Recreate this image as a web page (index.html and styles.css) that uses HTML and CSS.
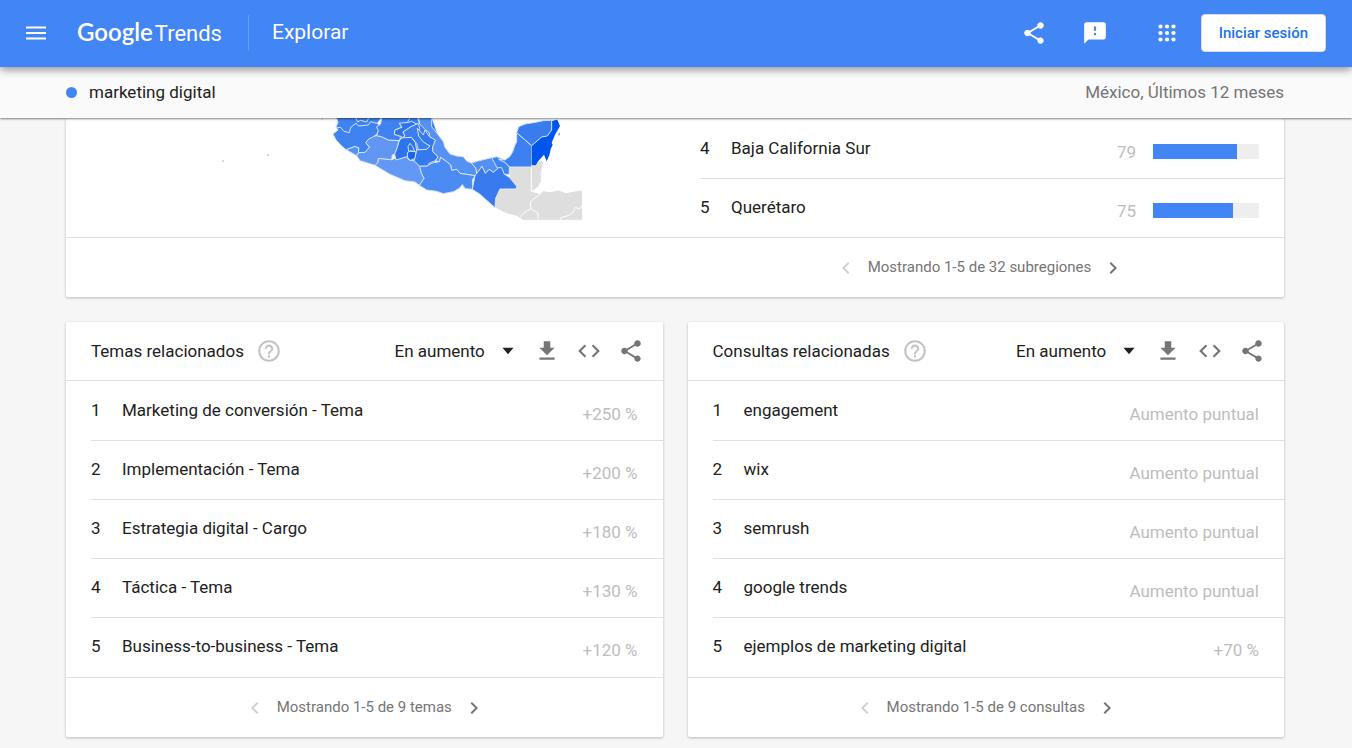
FILE: index.html
```html
<!DOCTYPE html>
<html lang="es">
<head>
<meta charset="utf-8">
<meta name="viewport" content="width=device-width, initial-scale=1">
<title>marketing digital - Explorar - Google Trends</title>
<link rel="stylesheet" href="styles.css">
</head>
<body>
<svg class="sprite" aria-hidden="true">
  <symbol id="share" viewBox="0 0 24 24"><path d="M18 16.08c-.76 0-1.44.3-1.96.77L8.91 12.7c.05-.23.09-.46.09-.7s-.04-.47-.09-.7l7.05-4.11c.54.5 1.25.81 2.04.81 1.66 0 3-1.34 3-3s-1.34-3-3-3-3 1.34-3 3c0 .24.04.47.09.7L8.04 9.81C7.5 9.31 6.79 9 6 9c-1.66 0-3 1.34-3 3s1.34 3 3 3c.79 0 1.5-.31 2.04-.81l7.12 4.16c-.05.21-.08.43-.08.65 0 1.61 1.31 2.92 2.92 2.92s2.92-1.31 2.92-2.92-1.31-2.92-2.92-2.92z"/></symbol>
  <symbol id="download" viewBox="0 0 24 24"><path d="M19 9h-4V3H9v6H5l7 7 7-7zM5 18v2h14v-2H5z"/></symbol>
  <symbol id="code" viewBox="0 0 24 24"><path d="M9.4 16.6L4.8 12l4.6-4.6L8 6l-6 6 6 6 1.4-1.4zm5.2 0l4.6-4.6-4.6-4.6L16 6l6 6-6 6-1.4-1.4z"/></symbol>
  <symbol id="help" viewBox="0 0 24 24"><path d="M11 18h2v-2h-2v2zm1-16C6.48 2 2 6.48 2 12s4.48 10 10 10 10-4.48 10-10S17.52 2 12 2zm0 18c-4.41 0-8-3.59-8-8s3.59-8 8-8 8 3.59 8 8-3.59 8-8 8zm0-14c-2.21 0-4 1.79-4 4h2c0-1.1.9-2 2-2s2 .9 2 2c0 2-3 1.75-3 5h2c0-2.25 3-2.5 3-5 0-2.21-1.79-4-4-4z"/></symbol>
  <symbol id="left" viewBox="0 0 24 24"><path d="M15.41 7.41L14 6l-6 6 6 6 1.41-1.41L10.83 12z"/></symbol>
  <symbol id="right" viewBox="0 0 24 24"><path d="M10 6L8.59 7.41 13.17 12l-4.58 4.59L10 18l6-6z"/></symbol>
  <symbol id="caret" viewBox="0 0 24 24"><path d="M6 8.500h12l-6 7z"/></symbol>
</svg>

<header class="topbar">
  <button class="icon-btn menu" aria-label="Menú principal"><svg class="icon" viewBox="0 0 24 24"><path d="M2 5.500h20v2H2zM2 11h20v2H2zM2 16.500h20v2H2z"/></svg></button>
  <a class="logo" href="#"><span class="logo-google">Google</span><span class="logo-trends">Trends</span></a>
  <h1 class="page-title">Explorar</h1>
  <div class="top-actions">
    <button class="icon-btn" aria-label="Compartir"><svg class="icon large"><use href="#share"/></svg></button>
    <button class="icon-btn" aria-label="Enviar comentarios"><svg class="icon large" viewBox="0 0 24 24"><path d="M20 2H4c-1.100 0-2 .9-2 2v18l4-4h14c1.100 0 2-.9 2-2V4c0-1.100-.9-2-2-2zm-7 12h-2v-2h2v2zm0-4h-2V6h2v4z"/></svg></button>
    <button class="icon-btn apps" aria-label="Aplicaciones de Google"><svg class="icon" viewBox="0 0 24 24"><g><circle cx="5.500" cy="5.500" r="2.100"/><circle cx="12" cy="5.500" r="2.100"/><circle cx="18.500" cy="5.500" r="2.100"/><circle cx="5.500" cy="12" r="2.100"/><circle cx="12" cy="12" r="2.100"/><circle cx="18.500" cy="12" r="2.100"/><circle cx="5.500" cy="18.500" r="2.100"/><circle cx="12" cy="18.500" r="2.100"/><circle cx="18.500" cy="18.500" r="2.100"/></g></svg></button>
    <a class="signin" href="#">Iniciar sesión</a>
  </div>
</header>

<div class="termbar">
  <span class="dot"></span>
  <span class="term">marketing digital</span>
  <span class="scope">México, Últimos 12 meses</span>
</div>

<main class="content">
  <section class="card regions" aria-label="Interés por subregión">
    <div class="region-body">
      <svg class="map" viewBox="210 118 380 106" role="img" aria-label="Mapa de México">
        <g transform="translate(310 110) scale(.33333)" stroke="#d3e2fc" stroke-width="3" stroke-linejoin="round">
          <path fill="#dedede" stroke="#fff" d="M598 171H664V155L680 157L694 150L700 158L694 190L694 215L684 232L667 244L690 250L700 242L722 245L745 240L768 248L800 242L818 240V331H640L620 319L586 310L555 293L557 265L570 237H618L612 225L598 210Z"/>
          <path fill="none" stroke="#fff" d="M664 171V243L692 250L662 275V297L648 304L630 320M662 297L684 309V328M818 285L808 297L796 292L788 309L775 317L752 323V329"/>
          <path fill="#3c7eef" stroke="none" d="M216 15H362L395 110L370 165L328 168L215 90Z"/>
          <path fill="#5491f3" d="M325 15H365V50L385 75L400 95L405 112L420 132L440 138L460 140L470 153L484 159L498 175L501 192L495 197L450 190L440 178L425 181L422 165L410 155L392 142L388 155L376 152L384 140L368 125V110L376 92L358 79L358 68L345 58L329 42Z"/>
          <path fill="#4b8bf2" d="M328 168L350 168L370 158L388 155L392 142L410 155L422 165L425 181L440 178L450 190L495 197L487 210L489 238L466 236L457 224L448 235L430 245L400 251L380 244L350 240L328 226L342 205L334 190Z"/>
          <path fill="#6399f4" d="M195 166L203 158L205 145L245 149L262 142L290 140L298 150L312 152L328 168L334 190L342 205L328 226L315 216L285 212L240 193L210 175Z"/>
          <path fill="#6197f3" d="M175 88L185 80L200 77L215 80L235 90L268 92L262 110L256 131L247 135L245 149L205 145L203 158L195 166L150 152L140 137L145 128L165 127L178 112L167 98Z"/>
          <path fill="#5491f3" d="M108 119L135 109L147 114L145 128L140 137Z"/>
          <path fill="#4082f0" d="M78 20L84 37L78 52L84 60L69 72L78 90L95 108L108 119L135 109L147 114L145 128L165 127L178 112L167 98L175 88L190 80L200 73L212 50L202 40L216 20Z"/>
          <path fill="#4082f0" d="M216 18L212 42L200 50L205 62L200 77L215 80L235 90L268 92L275 80L253 73L255 60L275 52L268 40L290 42L296 30L303 18Z"/>
          <path fill="#2d74ed" d="M296 37L268 40L276 52L255 60L253 73L275 80V86L285 78L279 66L303 50L325 45L305 34Z"/>
          <path fill="#3c7eef" d="M303 50L325 40L329 55L325 75L342 90L350 102L360 108L350 118L325 120L320 100L304 82L268 88L285 78L279 66Z"/>
          <path fill="#3579ee" d="M322 55L340 75L345 60L358 80L376 90L368 110V125L384 140L376 152L358 159L352 168L328 168L312 152L318 120L350 118L360 108L340 96L326 78Z"/>
          <path fill="#2c73ed" d="M268 92L275 84L304 82L316 98L320 120L312 152L298 150L290 140L258 150L254 132L262 112Z"/>
          <path fill="#1a66e9" d="M292 128L302 122L318 126L315 145L302 151L293 143Z"/>
          <path fill="none" d="M78 54L92 52L102 64L118 68L122 52L138 40L146 48L175 45L182 35L201 40M137 24L143 36L152 31L170 36L176 24M300 100L294 110L296 124H314L308 110ZM322 22L329 42"/>
          <path fill="#5390f3" d="M484 159L500 154L545 143L555 148L561 162L566 173L550 187L538 178L526 190L516 169L500 192L498 175Z"/>
          <path fill="#4385f0" d="M545 143L560 140L579 148L586 158L598 171V193H583L575 179L561 173Z"/>
          <path fill="#397bef" d="M495 197L516 169L526 190L538 178L550 187L566 173L575 173L583 193L598 202L620 229L618 237H570L557 265L555 293L510 253L487 238Z"/>
          <path fill="#3c80f1" d="M585 150L600 139L608 125L615 105L620 96L620 68L665 107V171H598L586 158L566 148Z"/>
          <path fill="#0055ec" stroke="none" d="M665 107L695 80L712 77L725 58L726 33L737 30L742 29L750 48L735 74L725 98L728 104L722 118L718 136L710 154L702 134L685 153L677 166L665 165ZM744 76L750 67L748 76Z"/>
          <path fill="#387cee" d="M620 68L626 50L645 42L670 38L700 32L725 31L725 60L712 78L695 81L665 107Z"/>
        </g>
        <path fill="#c8d9f5" d="M222 160h2v2h-2zM267 154l2 0v2h-2zM321 118l2 2h-2z"/>
      </svg>
      <ol class="rows region-rows" start="4">
        <li class="row"><span class="rank">4</span><a class="name" href="#">Baja California Sur</a><span class="value">79</span><span class="bar"><span class="bar-fill" style="width:79%"></span></span></li>
        <li class="row"><span class="rank">5</span><a class="name" href="#">Querétaro</a><span class="value">75</span><span class="bar"><span class="bar-fill" style="width:75%"></span></span></li>
      </ol>
    </div>
    <footer class="pager half"><button aria-label="Anterior" disabled><svg class="icon"><use href="#left"/></svg></button><span>Mostrando 1-5 de 32 subregiones</span><button aria-label="Siguiente"><svg class="icon"><use href="#right"/></svg></button></footer>
  </section>

  <section class="card">
    <header class="card-head">
      <h2>Temas relacionados</h2>
      <button class="icon-btn help" aria-label="Ayuda"><svg class="icon large"><use href="#help"/></svg></button>
      <div class="picker"><select aria-label="Ordenar temas"><option>En aumento</option><option>Principales</option></select><svg class="icon caret"><use href="#caret"/></svg></div>
      <div class="tools">
        <button class="icon-btn" aria-label="Descargar"><svg class="icon large"><use href="#download"/></svg></button>
        <button class="icon-btn" aria-label="Insertar"><svg class="icon large"><use href="#code"/></svg></button>
        <button class="icon-btn" aria-label="Compartir"><svg class="icon large"><use href="#share"/></svg></button>
      </div>
    </header>
    <ol class="rows">
      <li class="row"><span class="rank">1</span><a class="name" href="#">Marketing de conversión - Tema</a><span class="value">+250 %</span></li>
      <li class="row"><span class="rank">2</span><a class="name" href="#">Implementación - Tema</a><span class="value">+200 %</span></li>
      <li class="row"><span class="rank">3</span><a class="name" href="#">Estrategia digital - Cargo</a><span class="value">+180 %</span></li>
      <li class="row"><span class="rank">4</span><a class="name" href="#">Táctica - Tema</a><span class="value">+130 %</span></li>
      <li class="row"><span class="rank">5</span><a class="name" href="#">Business-to-business - Tema</a><span class="value">+120 %</span></li>
    </ol>
    <footer class="pager"><button aria-label="Anterior" disabled><svg class="icon"><use href="#left"/></svg></button><span>Mostrando 1-5 de 9 temas</span><button aria-label="Siguiente"><svg class="icon"><use href="#right"/></svg></button></footer>
  </section>

  <section class="card">
    <header class="card-head">
      <h2>Consultas relacionadas</h2>
      <button class="icon-btn help" aria-label="Ayuda"><svg class="icon large"><use href="#help"/></svg></button>
      <div class="picker"><select aria-label="Ordenar consultas"><option>En aumento</option><option>Principales</option></select><svg class="icon caret"><use href="#caret"/></svg></div>
      <div class="tools">
        <button class="icon-btn" aria-label="Descargar"><svg class="icon large"><use href="#download"/></svg></button>
        <button class="icon-btn" aria-label="Insertar"><svg class="icon large"><use href="#code"/></svg></button>
        <button class="icon-btn" aria-label="Compartir"><svg class="icon large"><use href="#share"/></svg></button>
      </div>
    </header>
    <ol class="rows">
      <li class="row"><span class="rank">1</span><a class="name" href="#">engagement</a><span class="value">Aumento puntual</span></li>
      <li class="row"><span class="rank">2</span><a class="name" href="#">wix</a><span class="value">Aumento puntual</span></li>
      <li class="row"><span class="rank">3</span><a class="name" href="#">semrush</a><span class="value">Aumento puntual</span></li>
      <li class="row"><span class="rank">4</span><a class="name" href="#">google trends</a><span class="value">Aumento puntual</span></li>
      <li class="row"><span class="rank">5</span><a class="name" href="#">ejemplos de marketing digital</a><span class="value">+70 %</span></li>
    </ol>
    <footer class="pager"><button aria-label="Anterior" disabled><svg class="icon"><use href="#left"/></svg></button><span>Mostrando 1-5 de 9 consultas</span><button aria-label="Siguiente"><svg class="icon"><use href="#right"/></svg></button></footer>
  </section>
</main>
</body>
</html>
```
FILE: styles.css
```css
* { box-sizing: border-box; }
body {
  margin: 0;
  background: #f6f6f6;
  color: #212121;
  font: 17px/24px Roboto, "Liberation Sans", sans-serif;
}
a { color: inherit; text-decoration: none; }
button, select { font: inherit; color: inherit; background: none; border: 0; padding: 0; margin: 0; }
h1, h2, ol { margin: 0; padding: 0; font-size: inherit; font-weight: 400; }
ol { list-style: none; }
.sprite { display: none; }
.icon { display: block; width: 24px; height: 24px; fill: currentColor; }
.large { width: 26px; height: 26px; }
.icon-btn { display: block; cursor: pointer; }

.topbar {
  position: relative;
  z-index: 2;
  display: flex;
  align-items: center;
  min-height: 67px;
  padding: 0 26px 1px 24px;
  background: #4285f4;
  color: #fff;
  box-shadow: 0 3px 8px rgba(0, 0, 0, .4);
}
.logo {
  display: flex;
  align-items: baseline;
  gap: 2px;
  margin-left: 29px;
  padding-right: 26px;
  line-height: 34px;
  border-right: 1px solid #659cf6;
}
.logo-google { font: 600 24px/34px Lato, sans-serif; }
.logo-trends { font-size: 22px; }
.page-title { margin-left: 23px; padding-bottom: 2px; font-size: 21px; }
.top-actions { display: flex; align-items: center; gap: 35px; margin-left: auto; }
.apps { margin-left: 12px; }
.signin {
  margin-left: -13px;
  padding: 6px 17px;
  border: 1px solid #dadce0;
  border-radius: 4px;
  background: #fff;
  color: #1a73e8;
  font-size: 15px;
  font-weight: 500;
}

.termbar {
  position: relative;
  z-index: 1;
  display: flex;
  align-items: center;
  min-height: 51px;
  padding: 0 68px 1px 66px;
  background: #fafafa;
  box-shadow: 0 1px 2px rgba(0, 0, 0, .5);
}
.dot { width: 11px; height: 11px; margin-right: 12px; border-radius: 50%; background: #4285f4; }
.scope { margin-left: auto; color: #757575; }

.content {
  display: grid;
  grid-template-columns: 1fr 1fr;
  gap: 25px;
  padding: 0 68px 11px 66px;
}
.card { background: #fff; border-radius: 2px; box-shadow: 0 1px 3px rgba(0, 0, 0, .26); }
.regions { grid-column: 1 / -1; }
.region-body { display: grid; grid-template-columns: 1fr 1fr; }
.map { width: 380px; height: 106px; margin-left: 144px; }

.card-head {
  display: flex;
  align-items: center;
  min-height: 59px;
  padding: 0 19px 1px 25px;
  border-bottom: 1px solid #e0e0e0;
}
.help { margin-left: 12px; color: #c4c4c4; }
.picker { display: flex; align-items: center; position: relative; margin-left: auto; }
.picker select { appearance: none; padding-right: 33px; cursor: pointer; }
.caret { position: absolute; right: 0; width: 22px; height: 22px; pointer-events: none; }
.tools { display: flex; gap: 16px; margin-left: 15px; color: #757575; }

.rows { padding: 0 0 1px 25px; }
.region-rows { padding: 1px 0 0 25px; }
.row { display: flex; align-items: center; min-height: 59px; padding: 0 25px 2px 0; }
.row + .row { border-top: 1px solid #e0e0e0; }
.rank { width: 31px; }
.value { margin-left: auto; padding-top: 8px; color: #bdbdbd; }
.bar { width: 106px; height: 15px; margin: 7px 0 0 17px; background: #eee; }
.bar-fill { display: block; height: 100%; background: #4285f4; }

.pager {
  display: flex;
  align-items: center;
  justify-content: center;
  gap: 10px;
  min-height: 60px;
  padding-bottom: 1px;
  border-top: 1px solid #e0e0e0;
  color: #757575;
  font-size: 15px;
}
.pager button { padding-top: 2px; cursor: pointer; }
.pager button:disabled { color: #d0d0d0; }
.half { padding-left: 50%; }
```
